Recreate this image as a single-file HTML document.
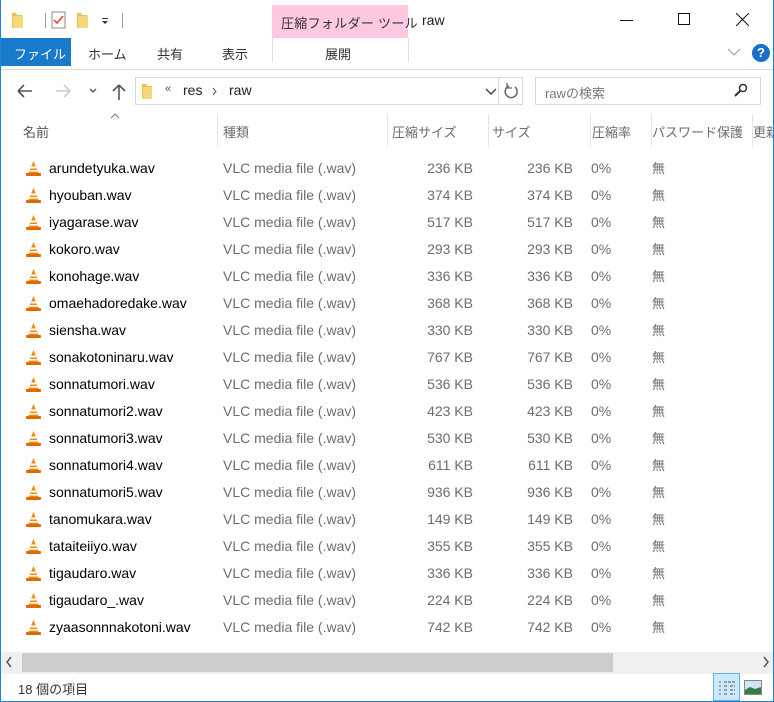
<!DOCTYPE html>
<html><head><meta charset="utf-8"><style>
*{margin:0;padding:0;box-sizing:border-box}
body{width:774px;height:702px;overflow:hidden;background:#fff;font-family:"Liberation Sans","Noto Sans CJK JP",sans-serif;font-size:13px;color:#000;position:relative}
.a{position:absolute;white-space:nowrap}
.frame{position:absolute;left:0;top:0;width:774px;height:702px;border:1px solid #1883d7;border-top:none;pointer-events:none}
.g{color:#6d6d6d}
.sep{position:absolute;top:114px;width:1px;height:33px;background:#e5e5e5}
.row{position:absolute;left:0;width:774px;height:27px;font-size:14px}
.row span{position:absolute;top:5px;white-space:nowrap;line-height:17px}
.row span.j{font-size:13px}
</style></head><body>
<svg class="a" style="left:10px;top:10px" width="120" height="20">
<path d="M2 3h4l1 2h5v13H2z" fill="#e8c04a"/><rect x="3" y="6" width="10" height="12" fill="#f6d87a"/>
<rect x="35" y="3" width="1" height="15" fill="#999"/>
<rect x="42" y="2" width="13" height="16" fill="#fff" stroke="#888"/><path d="M44 10l3 3 6-7" stroke="#e04020" stroke-width="1.5" fill="none"/>
<path d="M67 3h4l1 2h5v13H67z" fill="#e8c04a"/><rect x="68" y="6" width="10" height="12" fill="#f6d87a"/>
<rect x="92" y="8" width="6" height="1" fill="#333"/><path d="M92 11h6l-3 3z" fill="#333"/>
<rect x="112" y="3" width="1" height="15" fill="#999"/>
</svg>
<div class="a" style="left:272px;top:5px;width:136px;height:33px;background:#fdc8e0"></div>
<div class="a" style="left:281px;top:13px;font-size:13px;color:#333;letter-spacing:0.3px">圧縮フォルダー ツール</div>
<div class="a" style="left:422px;top:12px;font-size:14px;color:#222">raw</div>
<div class="a" style="left:620px;top:20px;width:13px;height:1px;background:#111"></div>
<div class="a" style="left:678px;top:13px;width:12px;height:12px;border:1px solid #111"></div>
<svg class="a" style="left:736px;top:13px" width="13" height="13"><path d="M0 0L13 13M13 0L0 13" stroke="#111"/></svg>
<div class="a" style="left:0;top:38px;width:71px;height:28px;background:#1979ca"></div>
<div class="a" style="left:14px;top:44px;color:#fff;font-size:13px">ファイル</div>
<div class="a" style="left:88px;top:44px;color:#333">ホーム</div>
<div class="a" style="left:157px;top:44px;color:#333">共有</div>
<div class="a" style="left:222px;top:44px;color:#333">表示</div>
<div class="a" style="left:272px;top:38px;width:1px;height:24px;background:#ddd"></div>
<div class="a" style="left:408px;top:38px;width:1px;height:24px;background:#ddd"></div>
<div class="a" style="left:325px;top:44px;color:#333">展開</div>
<svg class="a" style="left:727px;top:48px" width="14" height="8"><path d="M1 1l6 6 6-6" stroke="#999" fill="none"/></svg>
<div class="a" style="left:752px;top:44px;width:18px;height:18px;border-radius:50%;background:#1a6fc9;color:#fff;font-weight:bold;font-size:13px;text-align:center;line-height:18px">?</div>
<div class="a" style="left:0;top:69px;width:774px;height:1px;background:#dadada"></div>
<svg class="a" style="left:14px;top:82px" width="120" height="20">
<path d="M4 9h14M4 9l6-6M4 9l6 6" stroke="#555" stroke-width="1.6" fill="none"/>
<path d="M42 9h14M56 9l-6-6M56 9l-6 6" stroke="#ccc" stroke-width="1.6" fill="none"/>
<path d="M76 7l3 3 3-3" stroke="#555" stroke-width="1.4" fill="none"/>
<path d="M105 18V3M105 3l-6 6M105 3l6 6" stroke="#555" stroke-width="1.6" fill="none"/>
</svg>
<div class="a" style="left:135px;top:77px;width:364px;height:28px;border:1px solid #d9d9d9"></div>
<div class="a" style="left:498px;top:77px;width:25px;height:28px;border:1px solid #d9d9d9"></div>
<svg class="a" style="left:140px;top:82px" width="18" height="18"><path d="M2 2h4l1 2h5v13H2z" fill="#e8c04a"/><rect x="3" y="5" width="9" height="12" fill="#f6d87a"/></svg>
<div class="a" style="left:165px;top:83px;font-size:11px;color:#555">«</div>
<div class="a" style="left:183px;top:82px;color:#222;font-size:14px">res</div>
<svg class="a" style="left:212px;top:87px" width="6" height="9"><path d="M1 1l3 3.5L1 8" stroke="#555" fill="none"/></svg>
<div class="a" style="left:229px;top:82px;color:#222;font-size:14px">raw</div>
<svg class="a" style="left:485px;top:88px" width="12" height="8"><path d="M1 1l5 5 5-5" stroke="#444" stroke-width="1.4" fill="none"/></svg>
<svg class="a" style="left:503px;top:82px" width="16" height="18"><path d="M12 5A6 6 0 1 1 6 4" stroke="#666" stroke-width="1.5" fill="none"/><path d="M4 1v5h5" stroke="#666" stroke-width="1.3" fill="none"/></svg>
<div class="a" style="left:535px;top:77px;width:226px;height:28px;border:1px solid #d9d9d9"></div>
<div class="a" style="left:545px;top:83px;color:#777">rawの検索</div>
<svg class="a" style="left:734px;top:83px" width="14" height="14"><circle cx="9" cy="5" r="3.5" stroke="#333" stroke-width="1.5" fill="none"/><path d="M6.5 7.5L1 13" stroke="#333" stroke-width="2"/></svg>
<svg class="a" style="left:110px;top:113px" width="10" height="6"><path d="M1 5l4-4 4 4" stroke="#777" fill="none"/></svg>
<div class="a g" style="left:23px;top:122px;color:#555">名前</div>
<div class="a g" style="left:223px;top:122px">種類</div>
<div class="a g" style="left:392px;top:122px">圧縮サイズ</div>
<div class="a g" style="left:492px;top:122px">サイズ</div>
<div class="a g" style="left:592px;top:122px">圧縮率</div>
<div class="a g" style="left:652px;top:122px">パスワード保護</div>
<div class="a g" style="left:753px;top:122px">更新</div>
<div class="sep" style="left:217px"></div><div class="sep" style="left:387px"></div><div class="sep" style="left:488px"></div><div class="sep" style="left:590px"></div><div class="sep" style="left:651px"></div><div class="sep" style="left:752px"></div>
<div id="rows"></div>
<div class="a" style="left:1px;top:652px;width:772px;height:22px;background:#f0f0f0"></div>
<div class="a" style="left:22px;top:653px;width:591px;height:19px;background:#cdcdcd"></div>
<svg class="a" style="left:5px;top:656px" width="8" height="12"><path d="M6 1L2 6l4 5" stroke="#555" stroke-width="1.5" fill="none"/></svg>
<svg class="a" style="left:762px;top:656px" width="8" height="12"><path d="M2 1l4 5-4 5" stroke="#555" stroke-width="1.5" fill="none"/></svg>
<div class="a" style="left:18px;top:679px;color:#333">18 個の項目</div>
<div class="a" style="left:72px;top:678px;width:1px;height:20px;background:#eee"></div>
<div class="a" style="left:713px;top:673px;width:27px;height:28px;background:#cce8ff;border:1px solid #66b0e8"></div>
<svg class="a" style="left:718px;top:680px" width="18" height="16"><g stroke="#555"><path d="M1 2h2M1 6h2M1 10h2M1 14h2" stroke="#c33"/><path d="M6 2h11M6 6h4M12 6h5M6 10h4M12 10h5M6 14h4M12 14h5" stroke-dasharray="3 1"/></g></svg>
<svg class="a" style="left:744px;top:680px" width="18" height="15"><rect x="0.5" y="0.5" width="17" height="14" fill="#cfe4f5" stroke="#888"/><path d="M1 10l5-3 5 2 6-2v7H1z" fill="#3a7a4a"/></svg>
<div class="frame"></div>
<script>
var d=[["arundetyuka",236],["hyouban",374],["iyagarase",517],["kokoro",293],["konohage",336],["omaehadoredake",368],["siensha",330],["sonakotoninaru",767],["sonnatumori",536],["sonnatumori2",423],["sonnatumori3",530],["sonnatumori4",611],["sonnatumori5",936],["tanomukara",149],["tataiteiiyo",355],["tigaudaro",336],["tigaudaro_",224],["zyaasonnnakotoni",742]];
var h="";d.forEach(function(r,i){var y=155+i*27;
h+='<div class="row" style="top:'+y+'px"><svg style="position:absolute;left:25px;top:5px" width="17" height="17"><path d="M8.5 1L3 14h11z" fill="#f08a10"/><path d="M6.2 6.5h4.6l.8 2H5.4zM4.8 10h7.4l.6 1.6H4.2z" fill="#fff"/><rect x="1" y="13" width="15" height="3" rx="1" fill="#e06a00"/></svg>'+
'<span style="left:49px">'+r[0]+'.wav</span><span class="g" style="left:223px">VLC media file (.wav)</span>'+
'<span class="g" style="right:301px">'+r[1]+' KB</span><span class="g" style="right:201px">'+r[1]+' KB</span><span class="g" style="left:591px">0%</span><span class="g j" style="left:652px">無</span></div>';});
document.getElementById("rows").innerHTML=h;
</script>
</body></html>
